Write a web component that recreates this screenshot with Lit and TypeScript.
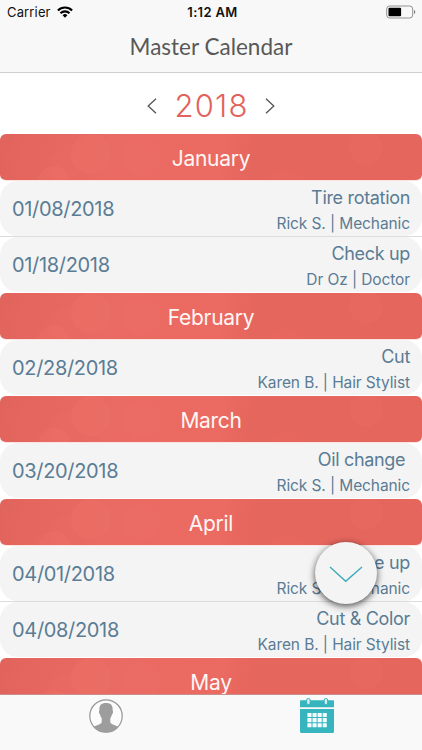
import { LitElement, html, css, svg } from "lit";
import { customElement } from "lit/decorators.js";

interface Appointment {
  date: string;
  title: string;
  who: string;
}

const months: { name: string; items: Appointment[] }[] = [
  {
    name: "January",
    items: [
      { date: "01/08/2018", title: "Tire rotation", who: "Rick S. | Mechanic" },
      { date: "01/18/2018", title: "Check up", who: "Dr Oz | Doctor" },
    ],
  },
  { name: "February", items: [{ date: "02/28/2018", title: "Cut", who: "Karen B. | Hair Stylist" }] },
  { name: "March", items: [{ date: "03/20/2018", title: "Oil change\u00a0", who: "Rick S. | Mechanic" }] },
  {
    name: "April",
    items: [
      { date: "04/01/2018", title: "Tune up", who: "Rick S. | Mechanic" },
      { date: "04/08/2018", title: "Cut & Color", who: "Karen B. | Hair Stylist" },
    ],
  },
  { name: "May", items: [] },
];

@customElement("app-root")
export class AppRoot extends LitElement {
  static styles = css`
    :host {
      display: flex;
      flex-direction: column;
      position: relative;
      width: 422px;
      height: 750px;
      overflow: hidden;
      background: #fff;
      font-family: Inter, "Liberation Sans", sans-serif;
      color: #5a7c94;
    }
    * { box-sizing: border-box; }
    svg { display: block; }
    .top {
      flex: none;
      height: 73px;
      background: #f8f8f8;
      border-bottom: 1px solid #cfcfcf;
    }
    .status {
      display: grid;
      grid-template-columns: 1fr auto 1fr;
      align-items: center;
      height: 24px;
      padding: 0 6px 0 7px;
      color: #111;
      font-size: 13px;
      line-height: 24px;
    }
    .carrier { display: flex; align-items: center; gap: 6px; letter-spacing: 0.15px; }
    .time { font-weight: 600; font-size: 13px; letter-spacing: 0.35px; padding-left: 2px; }
    .battery { justify-self: end; }
    .title {
      margin: 0;
      text-align: center;
      font: 400 22.5px/46px Lato, sans-serif;
      color: #585858;
    }
    .year {
      flex: none;
      display: flex;
      justify-content: center;
      align-items: center;
      gap: 17.5px;
      height: 61px;
      padding-top: 4px;
    }
    .year span {
      color: #e2635b;
      font-size: 31px;
      font-weight: 300;
      line-height: 40px;
      letter-spacing: 1.2px;
      margin: 0 -1px 0 0;
    }
    .list { flex: 1; min-height: 0; overflow: hidden; }
    .month {
      position: relative;
      height: 47px;
      border-bottom: 1px solid #fbe3e1;
      border-radius: 6px;
      overflow: hidden;
      background: linear-gradient(100deg, #e1645c 0%, #e6675f 12%, #ea6b63 28%, #eb6a61 52%, #e5665d 60%, #e5665d 100%);
      color: #fff6f4;
      font-size: 21px;
      line-height: 49px;
      letter-spacing: -0.3px;
      text-align: center;
    }
    .month svg { position: absolute; inset: 0; }
    .month span { position: relative; }
    .item {
      display: flex;
      justify-content: space-between;
      height: 56px;
      padding: 0 12px;
      background: linear-gradient(#dcdcdc, #dcdcdc) bottom / 100% 1px no-repeat, #fff;
      position: relative;
      isolation: isolate;
    }
    .item.last { background: #fff; }
    .item::before {
      content: "";
      position: absolute;
      inset: 0 0 1px;
      border-radius: 18px;
      background: #f4f4f4;
      z-index: -1;
    }
    .date { font-size: 20px; line-height: 57px; letter-spacing: -0.33px; }
    .info { text-align: right; }
    .what { font-size: 18px; line-height: 24px; padding-top: 5px; letter-spacing: -0.32px; }
    .who { font-size: 15.5px; line-height: 28px; letter-spacing: -0.1px; }
    .tabs {
      flex: none;
      display: grid;
      grid-template-columns: 1fr 1fr;
      justify-items: center;
      height: 56px;
      padding-top: 3px;
      background: #f9f9f9;
      border-top: 1px solid #c98f8b;
    }
    .fab {
      position: absolute;
      left: 315px;
      top: 542px;
      width: 62px;
      height: 62px;
      padding: 0;
      border: 0;
      border-radius: 50%;
      background: #f4f4f4;
      box-shadow: 0 2px 7px rgba(0, 0, 0, 0.7);
    }
  `;

  private bokeh() {
    return html`<svg width="422" height="47" fill="#f0746b">
      <circle cx="91" cy="20" r="20" opacity=".3"/>
      <circle cx="142" cy="23" r="19" opacity=".18"/>
      <circle cx="64" cy="32" r="16" opacity=".15"/>
      <circle cx="54" cy="48" r="16" opacity=".3"/>
      <circle cx="366" cy="14" r="17" opacity=".18"/>
      <circle cx="286" cy="56" r="20" opacity=".15"/>
    </svg>`;
  }

  private item(a: Appointment, last: boolean) {
    return html`<div class="item ${last ? "last" : ""}">
      <div class="date">${a.date}</div>
      <div class="info">
        <div class="what">${a.title}</div>
        <div class="who">${a.who}</div>
      </div>
    </div>`;
  }

  render() {
    return html`
      <header class="top">
        <div class="status">
          <div class="carrier">
            Carrier
            <svg width="16" height="12" viewBox="0 0 16 12" fill="none" stroke="#000" stroke-width="2.1">
              <path d="M.9 4.4a10.2 10.2 0 0 1 14.2 0M3.5 7.2a6.4 6.4 0 0 1 9 0" />
              <path d="M8 11.7 5.6 9.2a3.4 3.4 0 0 1 4.8 0z" fill="#000" stroke="none" />
            </svg>
          </div>
          <div class="time">1:12 AM</div>
          <svg class="battery" width="30" height="14" viewBox="0 0 30 14">
            <rect x="0.7" y="1" width="26" height="12" rx="3" fill="none" stroke="#929292" />
            <rect x="2.5" y="2.8" width="12.6" height="8.4" rx="1" />
            <path d="M28 5c1.7.6 1.7 3.4 0 4z" fill="#777" />
          </svg>
        </div>
        <h1 class="title">Master Calendar</h1>
      </header>
      <div class="year">
        <svg width="10" height="16" viewBox="0 0 10 16" fill="none" stroke="#555" stroke-width="1.3"><path d="M9 .7 1.2 8 9 15.3" /></svg>
        <span>2018</span>
        <svg width="10" height="16" viewBox="0 0 10 16" fill="none" stroke="#555" stroke-width="1.3"><path d="M1 .7 8.8 8 1 15.3" /></svg>
      </div>
      <main class="list">
        ${months.map(
          (m) => html`<div class="month">${this.bokeh()}<span>${m.name}</span></div>
            ${m.items.map((a, i) => this.item(a, i === m.items.length - 1))}`
        )}
      </main>
      <nav class="tabs">
        <svg width="36" height="36" viewBox="0 0 36 36">
          <defs><clipPath id="face"><circle cx="18" cy="18" r="16.4" /></clipPath></defs>
          <circle cx="18" cy="18" r="16.2" fill="#fcfcfc" stroke="#969696" stroke-width="1.2" />
          <path clip-path="url(#face)" fill="#9d9d9d" d="M18 5c5 0 7 2.400 6.600 7.400.8.4.5 3.300-.6 3.800-.4 1.900-1 3-1.700 3.800v4.200c1 2.600 6 3 9.500 5.600V36H4v-6.200c3.500-2.600 8.700-3 9.700-5.600V20c-.7-.8-1.300-1.900-1.700-3.800-1.100-.5-1.400-3.400-.6-3.800C11 7.400 13 5 18 5z" />
        </svg>
        <svg width="34" height="36" viewBox="0 0 34 36">
          <path fill="#36b5bf" d="M1 2.200h32a1 1 0 0 1 1 1V9.300H0V3.200a1 1 0 0 1 1-1zM0 11h34v22.500a1.500 1.500 0 0 1-1.500 1.500h-31A1.500 1.500 0 0 1 0 33.500z" />
          <g fill="#d5f1f2" stroke="#36b5bf" stroke-width="1"><rect x="6.700" y=".5" width="3.400" height="6" rx="1.500" /><rect x="24.200" y=".5" width="3.400" height="6" rx="1.500" /></g>
          <g fill="#f5ffff">
            ${[0, 1, 2].map((r) => [0, 1, 2, 3].map((c) => svg`<rect x=${7.4 + c * 5.1} y=${15 + r * 5.1} width="4.100" height="4.100" rx=".5"/>`))}
          </g>
        </svg>
      </nav>
      <button class="fab" aria-label="Scroll down">
        <svg width="62" height="62" fill="none" stroke="#3ba9b9" stroke-width="1.3"><path d="M15 25 30.700 39.300 47 25" /></svg>
      </button>
    `;
  }
}
